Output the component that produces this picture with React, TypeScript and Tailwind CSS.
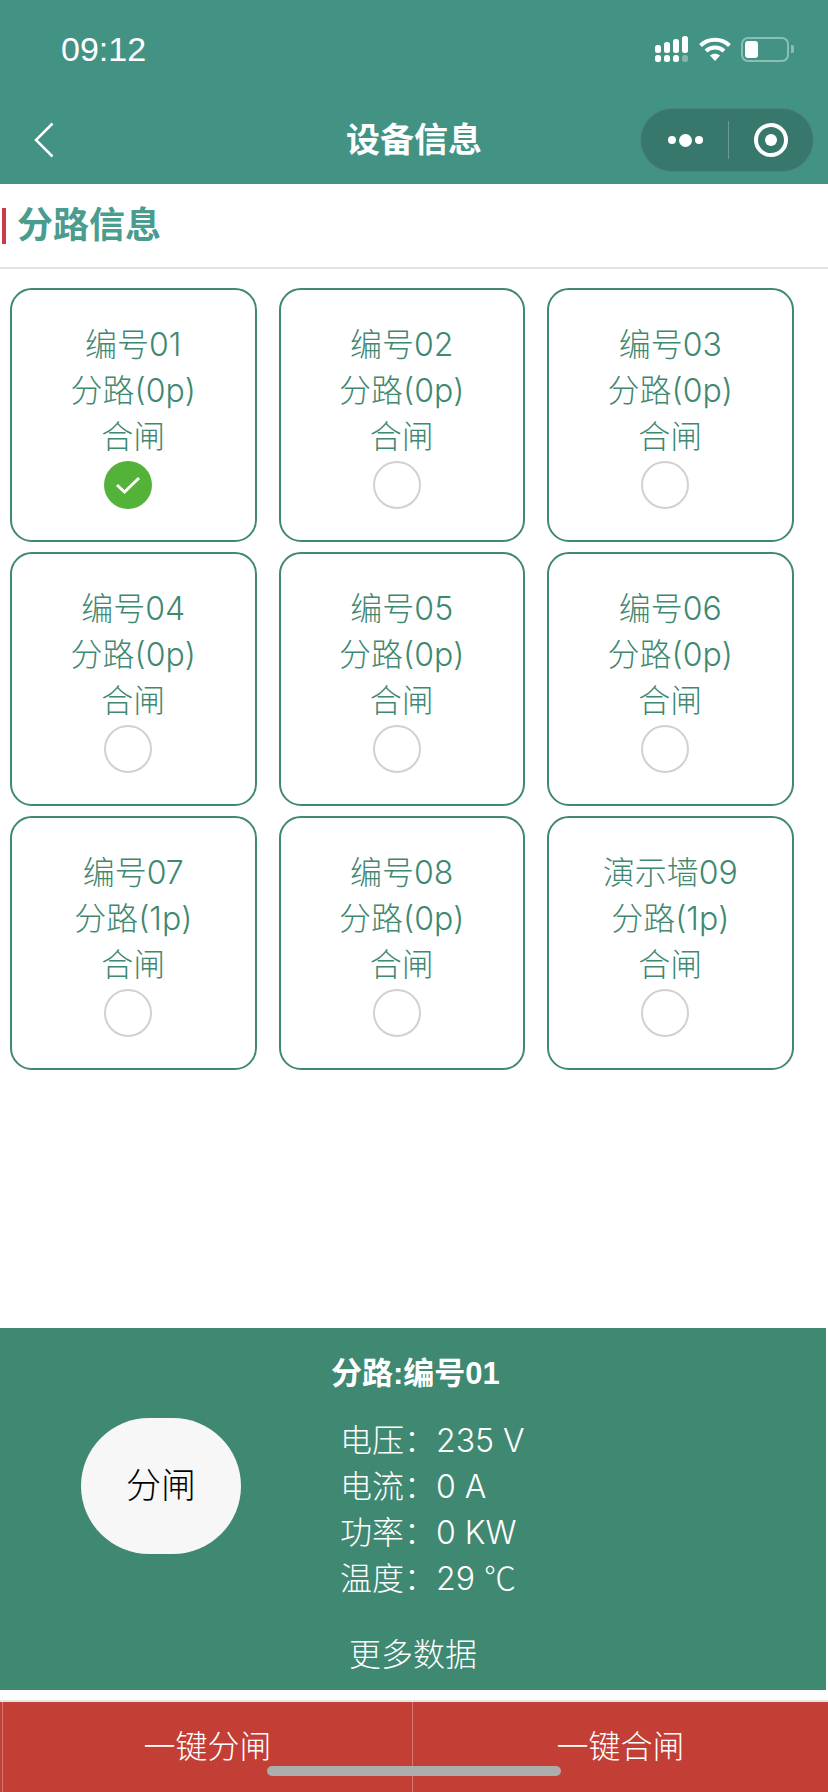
const font = '"Liberation Sans", "Noto Sans CJK SC", sans-serif';
const thinFont = 'Inter, "Noto Sans CJK SC", sans-serif';

const branches = [
  { name: "编号01", label: "分路(0p)", checked: true },
  { name: "编号02", label: "分路(0p)" },
  { name: "编号03", label: "分路(0p)" },
  { name: "编号04", label: "分路(0p)" },
  { name: "编号05", label: "分路(0p)" },
  { name: "编号06", label: "分路(0p)" },
  { name: "编号07", label: "分路(1p)" },
  { name: "编号08", label: "分路(0p)" },
  { name: "演示墙09", label: "分路(1p)" },
];

const readings = [
  { label: "电压", value: "235", unit: "V" },
  { label: "电流", value: "0", unit: "A" },
  { label: "功率", value: "0", unit: "KW" },
  { label: "温度", value: "29", unit: "℃" },
];

function StatusIcons() {
  return (
    <div className="flex items-center">
      {/* signal */}
      <svg width="33" height="26" viewBox="0 0 33 26" fill="#fff">
        <rect x="0" y="9" width="6" height="8" rx="2.5" />
        <rect x="9" y="6" width="6" height="11" rx="2.5" />
        <rect x="18" y="3" width="6" height="14" rx="2.5" />
        <rect x="27" y="0" width="6" height="17" rx="2.5" />
        <rect x="0" y="19" width="6" height="7" rx="2.5" />
        <rect x="9" y="19" width="6" height="7" rx="2.5" />
        <rect x="18" y="19" width="6" height="7" rx="2.5" />
        <rect x="27" y="19" width="6" height="7" rx="2.5" opacity="0.35" />
      </svg>
      {/* wifi */}
      <svg className="ml-[11px]" width="32" height="24" viewBox="0 0 32 24" fill="none" stroke="#fff" strokeWidth="4">
        <path d="M1.5 8.5C9.5 .8 22.5 .8 30.5 8.5" />
        <path d="M7 14C12 9.2 20 9.2 25 14" />
        <path d="M16 24L11 18.5C14 16 18 16 21 18.5Z" fill="#fff" stroke="none" />
      </svg>
      {/* battery */}
      <div className="ml-[10px] flex items-center">
        <div className="h-[25px] w-[48px] rounded-[7px] border-2 border-white/40 p-[2px]">
          <div className="h-full w-[13px] rounded-[3px] bg-white" />
        </div>
        <div className="ml-[2px] h-[8px] w-[3px] rounded-r-[2px] bg-white/40" />
      </div>
    </div>
  );
}

function Capsule() {
  return (
    <div className="flex h-[64px] w-[174px] items-center rounded-full border border-white/10 bg-[#38786c]">
      <div className="flex flex-1 items-center justify-center gap-[3px] pl-[2px]">
        <span className="h-[8px] w-[8px] rounded-full bg-white" />
        <span className="h-[13px] w-[13px] rounded-full bg-white" />
        <span className="h-[8px] w-[8px] rounded-full bg-white" />
      </div>
      <div className="h-[38px] w-px bg-white/25" />
      <div className="flex flex-1 items-center justify-center">
        <div className="flex h-[34px] w-[34px] items-center justify-center rounded-full border-[4px] border-white">
          <span className="h-[12px] w-[12px] rounded-full bg-white" />
        </div>
      </div>
    </div>
  );
}

function BranchCard({ name, label, checked }: { name: string; label: string; checked?: boolean }) {
  return (
    <div
      className="flex h-[254px] flex-col items-center rounded-[22px] border-2 border-[#3f8872] pt-[32px] text-[32px] font-light leading-[46px] text-[#3f8872]"
      style={{ fontFamily: thinFont }}
    >
      <div>{name}</div>
      <div>{label}</div>
      <div>合闸</div>
      {checked ? (
        <div className="mr-[10px] mt-[1px] flex h-[48px] w-[48px] items-center justify-center rounded-full bg-[#53b338]">
          <svg width="26" height="20" viewBox="0 0 26 20" fill="none" stroke="#fff" strokeWidth="3">
            <path d="M2 10L9.5 17L24 3" />
          </svg>
        </div>
      ) : (
        <div className="mr-[10px] mt-[1px] h-[48px] w-[48px] rounded-full border-2 border-[#d1d1d1]" />
      )}
    </div>
  );
}

export default function App() {
  return (
    <div className="relative flex h-[1792px] w-[828px] flex-col overflow-hidden bg-white" style={{ fontFamily: font }}>
      {/* status bar + nav */}
      <header className="h-[184px] shrink-0 bg-[#429384] text-white">
        <div className="flex h-[100px] items-center justify-between pb-[2px] pl-[61px] pr-[34px]">
          <span className="text-[34px] font-medium leading-none">09:12</span>
          <StatusIcons />
        </div>
        <div className="mt-[8px] grid grid-cols-[1fr_auto_1fr] items-center">
          <div className="pl-[34px]">
            <svg width="20" height="36" viewBox="0 0 20 36" fill="none" stroke="#fff" strokeWidth="2.5">
              <path d="M18.5 1.5L2 18L18.5 34.5" />
            </svg>
          </div>
          <h1 className="text-[34px] font-bold leading-none">设备信息</h1>
          <div className="flex justify-end pr-[14px]">
            <Capsule />
          </div>
        </div>
      </header>

      {/* section title */}
      <div className="flex h-[85px] shrink-0 items-center border-b-2 border-[#e5e5e5] pl-[2px]">
        <div className="h-[36px] w-[4px] bg-[#cc3a4c]" />
        <h2 className="ml-[11px] text-[36px] font-bold leading-none text-[#4a9c8e]">分路信息</h2>
      </div>

      {/* branch grid */}
      <div className="grid grid-cols-[246.5px_246.5px_246.5px] gap-x-[22px] gap-y-[10px] pl-[10px] pt-[19px]">
        {branches.map((b) => (
          <BranchCard key={b.name} name={b.name} label={b.label} checked={b.checked} />
        ))}
      </div>

      <div className="flex-1" />

      {/* selected branch panel */}
      <section className="h-[362px] w-[826px] shrink-0 bg-[#3f8872] text-white">
        <div className="pl-[331px] pt-[29px] text-[31px] font-bold leading-[34px]">分路:编号01</div>
        <div className="flex pl-[81px] pt-[27px]">
          <button className="flex h-[136px] w-[160px] items-center justify-center rounded-[68px] bg-[#f7f7f7] text-[35px] font-light text-black">
            分闸
          </button>
          <div className="ml-[99px] text-[32px] font-light leading-[46px]" style={{ fontFamily: thinFont }}>
            {readings.map((r) => (
              <div key={r.label} className="flex h-[46px]">
                <span className="w-[96px] shrink-0 whitespace-nowrap">{r.label}：</span>
                <span className="whitespace-nowrap">
                  {r.value}{" "}
                  {r.unit === "℃" ? (
                    <span className="font-['Noto_Sans_CJK_SC'] leading-none">{r.unit}</span>
                  ) : (
                    r.unit
                  )}
                </span>
              </div>
            ))}
          </div>
        </div>
        <div className="pt-[30px] text-center text-[32px] font-light leading-[46px]">更多数据</div>
      </section>

      {/* actions */}
      <div className="mt-[10px] flex h-[92px] shrink-0 border-t-2 border-[#e5e5e5] bg-[#c33e35] pl-[2px] text-[32px] font-light text-white">
        <button className="w-[411px] border-l border-r border-white/30">一键分闸</button>
        <button className="flex-1">一键合闸</button>
      </div>

      {/* home indicator */}
      <div className="absolute bottom-[16px] left-[267px] h-[10px] w-[294px] rounded-full bg-[#adadad]" />
    </div>
  );
}
